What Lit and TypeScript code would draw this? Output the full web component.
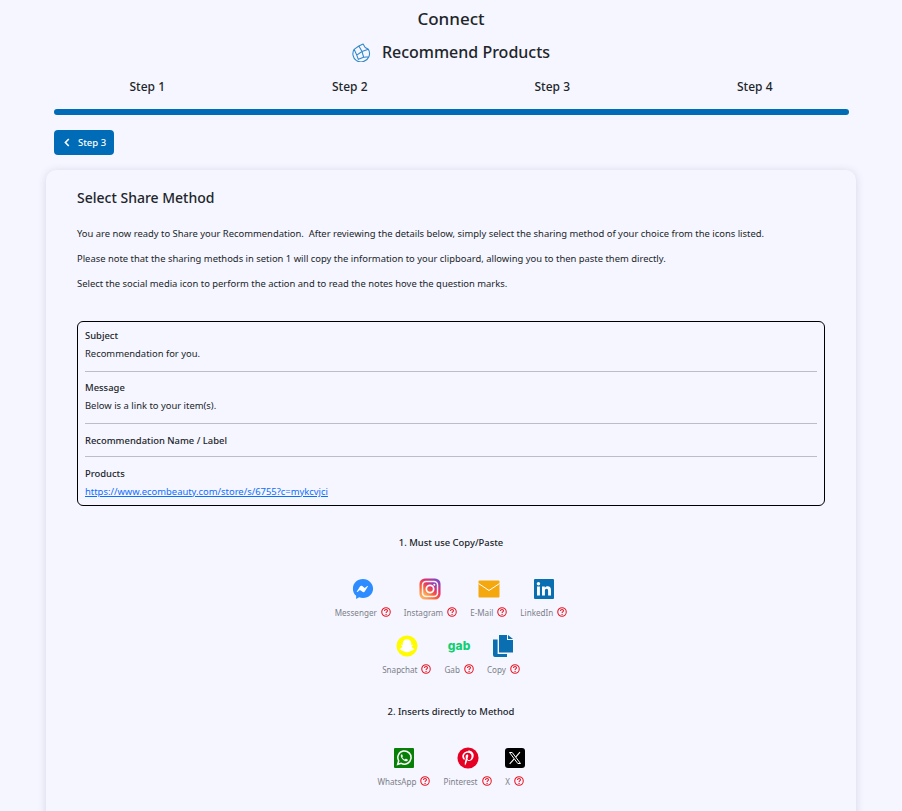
import { LitElement, html, css, svg } from "lit";
import { customElement } from "lit/decorators.js";

const q = html`<svg class="q" viewBox="0 0 16 16" width="10" height="10"><circle cx="8" cy="8" r="6.8" fill="none" stroke="#ea1522" stroke-width="1.7"/><path d="M5.700 6.200c0-1.400 1-2.200 2.400-2.200s2.300.8 2.300 2c0 1.900-2.300 1.800-2.300 3.500" fill="none" stroke="#ea1522" stroke-width="1.7"/><circle cx="8.100" cy="11.800" r="1.050" fill="#ea1522"/></svg>`;

const icons: Record<string, unknown> = {
  messenger: html`<svg viewBox="0 0 24 24" width="22" height="22"><path fill="#2d8cff" d="M12 1C5.800 1 1 5.500 1 11.600c0 3.200 1.300 5.900 3.500 7.800v3.600l3.300-1.900c1.300.4 2.700.6 4.200.6 6.200 0 11-4.500 11-10.100S18.200 1 12 1z"/><path fill="#fff" d="M5.300 14.600l3.400-5.400c.5-.8 1.700-1 2.500-.4l2.700 2 2.800-2.100c.4-.3.900.2.600.6l-3.400 5.400c-.5.800-1.700 1-2.500.4l-2.700-2-2.800 2.100c-.4.300-.9-.2-.6-.6z"/></svg>`,
  instagram: html`<svg viewBox="0 0 24 24" width="22" height="22"><defs><linearGradient id="ig" x1="0.1" y1="1" x2="0.9" y2="0"><stop offset="0" stop-color="#fdc468"/><stop offset="0.35" stop-color="#f7643c"/><stop offset="0.65" stop-color="#e1306c"/><stop offset="1" stop-color="#6a4fd8"/></linearGradient></defs><rect x="0.500" y="0.500" width="23" height="23" rx="6" fill="url(#ig)"/><rect x="3" y="3" width="18" height="18" rx="4.500" fill="#fdf3f2"/><rect x="4.600" y="4.600" width="14.800" height="14.800" rx="3.200" fill="url(#ig)"/><circle cx="12" cy="12" r="4" fill="none" stroke="#fff" stroke-width="1.900"/><circle cx="16.700" cy="7.300" r="1.100" fill="#fff"/></svg>`,
  email: html`<svg viewBox="0 0 22 18" width="22" height="18"><rect x="0.500" y="0.500" width="21" height="17" rx="1" fill="#f5a80e"/><path d="M0.500 3.500L11 10.500L21.500 3.500" fill="none" stroke="#fff" stroke-width="1"/></svg>`,
  linkedin: html`<svg viewBox="0 0 20 20" width="20" height="20"><rect width="20" height="20" rx="1" fill="#0a6fb0"/><rect x="3" y="7.500" width="2.900" height="9" fill="#fff"/><circle cx="4.450" cy="4.700" r="1.700" fill="#fff"/><path fill="#fff" d="M8 7.500h2.800v1.300c.5-.9 1.500-1.500 2.800-1.500 2.400 0 3.400 1.500 3.400 4v5.200h-2.900v-4.700c0-1.200-.4-2-1.500-2s-1.700.8-1.700 2v4.700H8z"/></svg>`,
  snapchat: html`<svg viewBox="0 0 24 24" width="22" height="22"><circle cx="12" cy="12" r="11.500" fill="#fffc00"/><path fill="#fff" d="M12 4.500c3 0 4.700 2.200 4.700 4.800v1.500l1.400-.3c.6 0 .8.700.2 1l-1.300.7c.4 1.300 1.400 2.300 2.700 2.800.5.200.4.800-.1.900l-1.500.4-.3 1c-1-.1-1.900 0-2.700.6-.8.500-1.600.9-3.100.9s-2.300-.4-3.100-.9c-.8-.6-1.700-.7-2.700-.6l-.3-1-1.500-.4c-.5-.1-.6-.7-.1-.9 1.300-.5 2.300-1.500 2.700-2.800l-1.300-.7c-.6-.3-.4-1 .2-1l1.400.3V9.300c0-2.600 1.700-4.800 4.700-4.800z"/></svg>`,
  copy: html`<svg viewBox="0 0 20 22" width="20" height="22"><path fill="#0a6fb0" d="M6 0h8v5h6v12.500H6z"/><path fill="#0a6fb0" d="M15 0l5 4h-5z"/><path fill="#0a6fb0" d="M0 4.500h4.600v14.500H14V22H2a2 2 0 0 1-2-2z"/></svg>`,
  whatsapp: html`<svg viewBox="0 0 20 20" width="20" height="20"><rect width="20" height="20" rx="1" fill="#088008"/><path fill="none" stroke="#fff" stroke-width="1.500" d="M3.700 16.300l1-3.500a6.600 6.600 0 1 1 2.500 2.500z"/><path fill="#fff" d="M7.800 6.200c-.6.200-1.200 1-1 2 .3 1.700 2.600 4.300 4.800 5 1 .3 1.900-.4 2.200-1 .2-.4 0-.7-.3-.8l-1.400-.7c-.3-.1-.5 0-.7.300l-.5.600c-1.100-.4-2.100-1.300-2.700-2.400l.5-.6c.2-.2.200-.4.100-.6l-.6-1.500c-.1-.2-.3-.3-.4-.3z"/></svg>`,
  pinterest: html`<svg viewBox="0 0 24 24" width="22" height="22"><circle cx="12" cy="12" r="11.500" fill="#e60023"/><path fill="#fff" d="M12.300 4.500c-4.200 0-6.500 2.800-6.500 5.800 0 1.400.8 3.200 2 3.700.2.100.3 0 .4-.2l.3-1c0-.2 0-.3-.1-.4-.5-.6-.8-1.400-.8-2.200 0-2.100 1.600-4 4.300-4 2.300 0 4 1.600 4 3.800 0 2.500-1.300 4.300-3 4.300-.9 0-1.600-.8-1.400-1.700.3-1.100.8-2.300.8-3.100 0-.7-.4-1.300-1.200-1.300-1 0-1.700 1-1.700 2.300 0 .8.300 1.400.3 1.400l-1.100 4.800c-.3 1.200 0 3.100 0 3.300 0 .1.100.1.200.1.100-.1 1.300-1.900 1.700-3.500l.6-2.400c.3.600 1.200 1.100 2.200 1.100 2.900 0 4.900-2.700 4.900-6.200 0-2.700-2.300-5.200-5.900-5.200z"/></svg>`,
  x: html`<svg viewBox="0 0 20 20" width="20" height="20"><rect width="20" height="20" rx="3" fill="#000"/><path fill="none" stroke="#fff" stroke-width="1" d="M4.500 4.500h2.700l8.300 11h-2.700z"/><path fill="none" stroke="#fff" stroke-width="1.100" d="M15 4.200l-4.300 4.900M9 11.200l-4.300 4.600"/></svg>`,
};

const logo = svg`<path fill="none" stroke="#2f86c8" stroke-width="1" stroke-linejoin="round" d="M6.500 2.800L10.500 1l2 3.300 3 1.700a8 8 0 0 1 .5 7 8 8 0 0 1-12 3.500A8 8 0 0 1 2 6l4.500-3.200zM6.500 2.800l3 5.200 6-2M9.500 8l-5 3.500L2 6M4.500 11.500l1.500 4 5-2L9.500 8M11 13.500l5-.5"/>`;

const row1 = [["messenger", "Messenger"], ["instagram", "Instagram"], ["email", "E-Mail"], ["linkedin", "LinkedIn"]];
const row2 = [["snapchat", "Snapchat"], ["gab", "Gab"], ["copy", "Copy"]];
const row3 = [["whatsapp", "WhatsApp"], ["pinterest", "Pinterest"], ["x", "X"]];

@customElement("app-root")
export class AppRoot extends LitElement {
  static styles = css`
    :host { display: block; height: 811px; overflow: hidden; background: #f5f6ff; color: #212529; font-family: "Noto Sans", "Open Sans", sans-serif; }
    .title { text-align: center; font-size: 17px; font-weight: 500; line-height: 24px; padding-top: 7px; }
    .sub { display: flex; justify-content: center; align-items: center; gap: 11px; font-size: 16px; font-weight: 500; line-height: 24px; margin-top: 9px; }
    .steps { display: grid; grid-template-columns: repeat(4, 1fr); margin: 14px 46px 0; text-align: center; font-size: 12px; font-weight: 500; line-height: 18px; }
    .bar { height: 6px; border-radius: 3px; background: #006cb8; margin: 13px 53px 0 54px; }
    .back { display: inline-flex; align-items: center; gap: 8px; height: 25px; width: 60px; box-sizing: border-box; padding-left: 10px; margin: 15px 0 0 54px; background: #006cb8; color: #fff; border-radius: 4px; font-size: 9.500px; font-weight: 500; vertical-align: top; }
    .card { margin: 15px 46px 0; height: 680px; box-sizing: border-box; padding: 18px 31px; border-radius: 10px; background: #f5f6ff; box-shadow: 0 1px 8px rgba(60, 60, 110, .17); }
    h2 { margin: 0; font-size: 14px; font-weight: 500; line-height: 20px; }
    p { margin: 0; font-size: 9.420px; line-height: 13px; }
    .intro { margin-top: 19px; display: grid; gap: 12px; }
    .box { margin-top: 31px; box-sizing: border-box; height: 185px; border: 1px solid #000; border-radius: 6px; padding: 7px; font-size: 9.420px; }
    .sec { border-bottom: 1px solid #bdbdc9; height: 43px; box-sizing: border-box; margin-bottom: 9px; }
    .sec.mid { margin-bottom: 10px; }
    .sec.short { height: 23px; margin-bottom: 10px; }
    .sec.last { border: 0; margin: 0; }
    .lab { font-weight: 500; line-height: 13px; }
    .val { line-height: 13px; margin-top: 5px; }
    a { color: #0d6efd; }
    .head { text-align: center; font-size: 9.420px; font-weight: 500; line-height: 13px; }
    .h1 { margin-top: 30px; }
    .h2 { margin-top: 29px; }
    .icons { display: flex; justify-content: center; gap: 13px; }
    .r1 { margin-top: 29px; }
    .r2 { margin-top: 16px; }
    .r3 { margin-top: 29px; }
    .item { display: flex; flex-direction: column; align-items: center; gap: 7px; }
    .ic { height: 22px; display: flex; align-items: center; justify-content: center; }
    .gab { font-family: "Inter", sans-serif; font-size: 12px; font-weight: 800; color: #10cf72; line-height: 22px; letter-spacing: .2px; }
    .name { display: flex; align-items: flex-start; gap: 4px; font-size: 8.100px; line-height: 12px; color: #7d7f88; }
    .q { display: block; }
    .chev { display: block; }
  `;

  private item(d: string[]) {
    const [k, n] = d;
    return html`<div class="item"><div class="ic">${k === "gab" ? html`<span class="gab">gab</span>` : icons[k]}</div><div class="name">${n} ${q}</div></div>`;
  }

  render() {
    return html`
      <div class="title">Connect</div>
      <div class="sub"><svg width="19" height="19" viewBox="0 0 18 18">${logo}</svg><span>Recommend Products</span></div>
      <div class="steps"><div>Step 1</div><div>Step 2</div><div>Step 3</div><div>Step 4</div></div>
      <div class="bar"></div>
      <div class="back"><svg class="chev" width="6" height="9" viewBox="0 0 6 9"><path d="M4.800 1L1.400 4.500l3.400 3.500" fill="none" stroke="#fff" stroke-width="1.600"/></svg><span>Step 3</span></div>
      <div class="card">
        <h2>Select Share Method</h2>
        <div class="intro">
          <p>You are now ready to Share your Recommendation.&nbsp; After reviewing the details below, simply select the sharing method of your choice from the icons listed.</p>
          <p>Please note that the sharing methods in setion 1 will copy the information to your clipboard, allowing you to then paste them directly.</p>
          <p>Select the social media icon to perform the action and to read the notes hove the question marks.</p>
        </div>
        <div class="box">
          <div class="sec"><div class="lab">Subject</div><div class="val">Recommendation for you.</div></div>
          <div class="sec mid"><div class="lab">Message</div><div class="val">Below is a link to your item(s).</div></div>
          <div class="sec short"><div class="lab">Recommendation Name / Label</div></div>
          <div class="sec last"><div class="lab">Products</div><div class="val"><a href="#">https://www.ecombeauty.com/store/s/6755?c=mykcvjci</a></div></div>
        </div>
        <div class="head h1">1. Must use Copy/Paste</div>
        <div class="icons r1">${row1.map((d) => this.item(d))}</div>
        <div class="icons r2">${row2.map((d) => this.item(d))}</div>
        <div class="head h2">2. Inserts directly to Method</div>
        <div class="icons r3">${row3.map((d) => this.item(d))}</div>
      </div>
    `;
  }
}
